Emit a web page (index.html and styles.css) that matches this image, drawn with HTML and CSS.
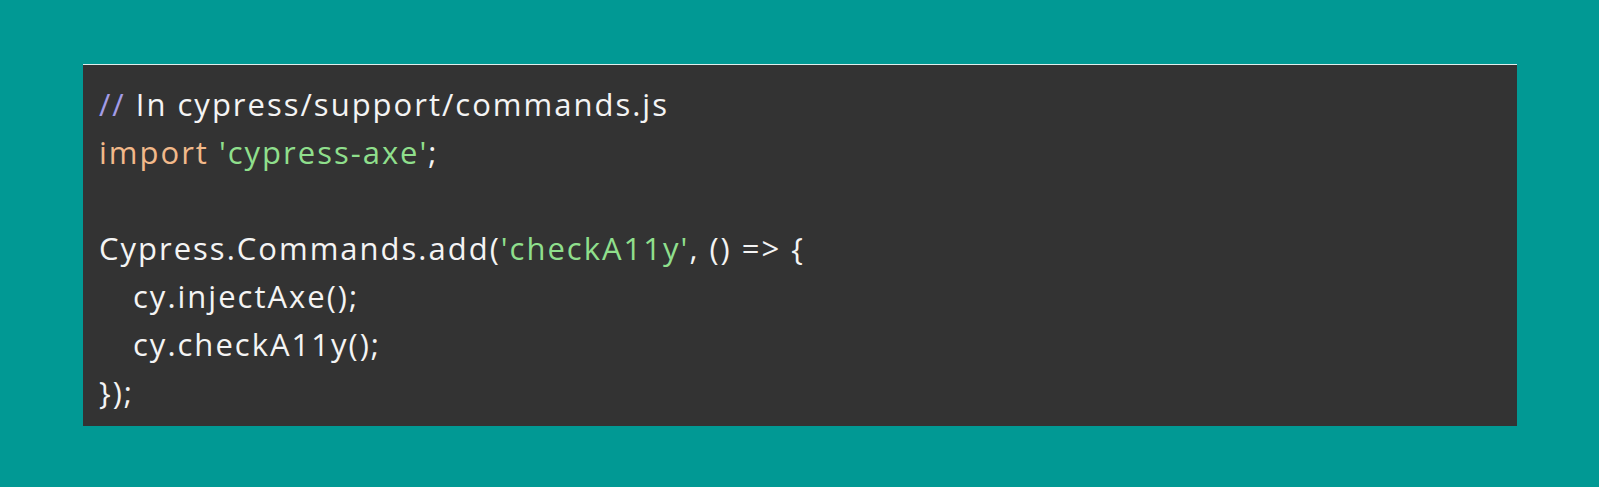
FILE: index.html
```html
<!DOCTYPE html>
<html lang="en">
<head>
<meta charset="utf-8">
<title>Cypress axe</title>
<link rel="stylesheet" href="styles.css">
</head>
<body>
<div class="page">
  <pre class="code"><div class="line"><span class="cmt">//</span> In cypress/support/commands.js</div><div class="line"><span class="kw">import</span> <span class="str">'cypress-axe'</span>;</div><div class="line"> </div><div class="line">Cypress.Commands.add(<span class="str">'checkA11y'</span>, () =&gt; {</div><div class="line indent">cy.injectAxe();</div><div class="line indent">cy.checkA11y();</div><div class="line">});</div></pre>
</div>
</body>
</html>
```
FILE: styles.css
```css
html, body {
  margin: 0;
  padding: 0;
  background: #019994;
}
.page {
  padding: 64px 0 0 83px;
}
.code {
  margin: 0;
  width: 1434px;
  box-sizing: border-box;
  height: 362px;
  background: #333333;
  border-top: 1px solid #dfeeec;
  padding: 15px 16px 10px 16px;
  font-family: "Open Sans", sans-serif;
  font-size: 31px;
  line-height: 48px;
  letter-spacing: 2px;
  color: #f4f4f4;
  white-space: pre;
}
.line {
  height: 48px;
}
.indent {
  padding-left: 34px;
}
.cmt { color: #a39ce6; }
.kw { color: #f2b98a; }
.str { color: #8fdf8c; }
```
